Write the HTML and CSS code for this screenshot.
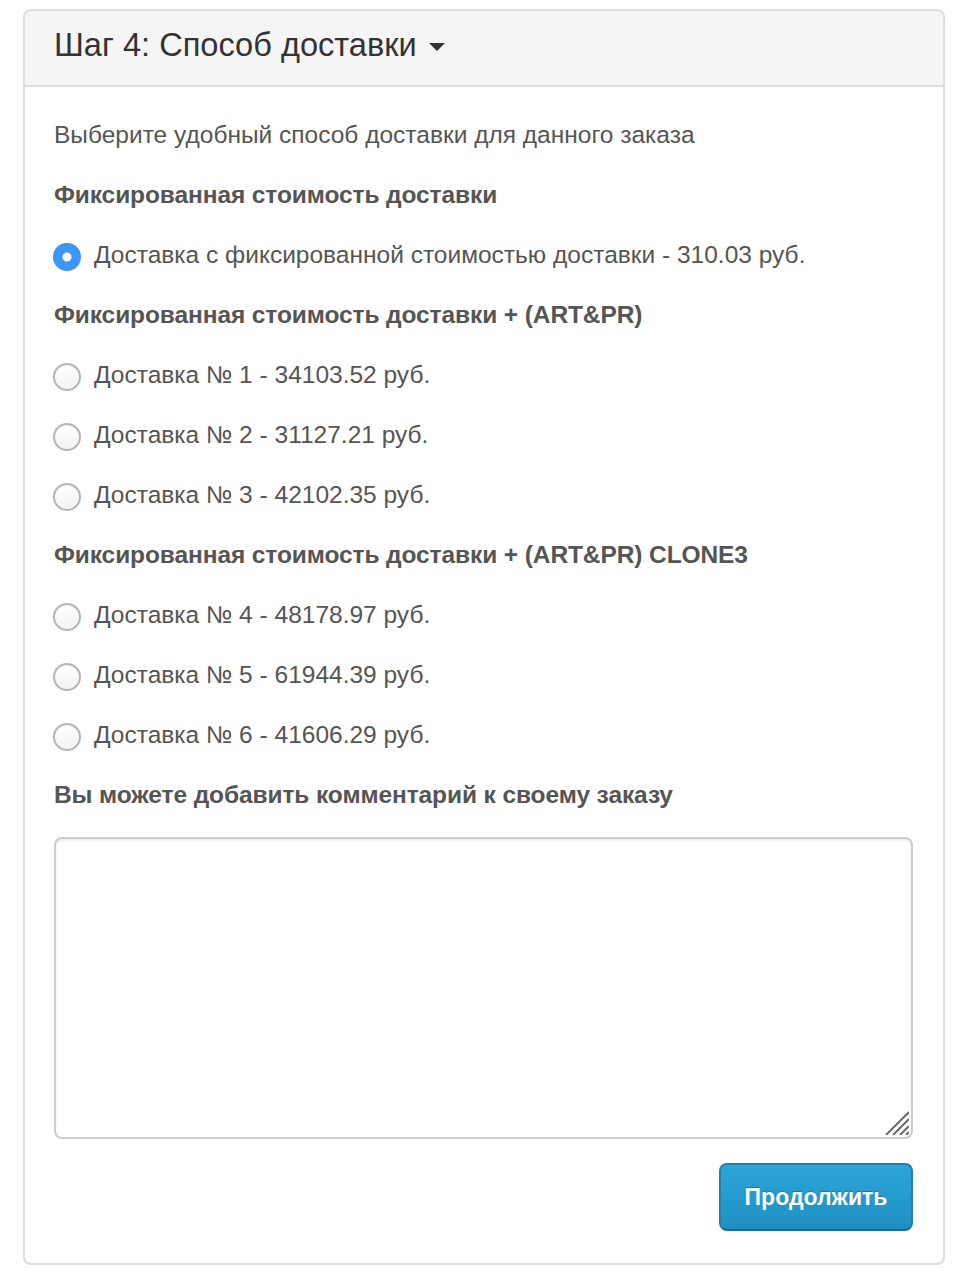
FILE: index.html
```html
<!DOCTYPE html>
<html lang="ru">

<head>
    <meta charset="UTF-8">
    <title>Шаг 4: Способ доставки</title>
    <link rel="stylesheet" href="styles.css">
</head>

<body>
    <div class="panel">
        <div class="panel-heading">
            <h4 class="panel-title">Шаг 4: Способ доставки <span class="caret"></span></h4>
        </div>
        <div class="panel-body">
            <p>Выберите удобный способ доставки для данного заказа</p>

            <p><strong>Фиксированная стоимость доставки</strong></p>
            <label class="radio">
                <input type="radio" name="shipping" checked>
                <span class="mark"></span>
                Доставка с фиксированной стоимостью доставки - 310.03 руб.
            </label>

            <p><strong>Фиксированная стоимость доставки + (ART&amp;PR)</strong></p>
            <label class="radio">
                <input type="radio" name="shipping">
                <span class="mark"></span>
                Доставка № 1 - 34103.52 руб.
            </label>
            <label class="radio">
                <input type="radio" name="shipping">
                <span class="mark"></span>
                Доставка № 2 - 31127.21 руб.
            </label>
            <label class="radio">
                <input type="radio" name="shipping">
                <span class="mark"></span>
                Доставка № 3 - 42102.35 руб.
            </label>

            <p><strong>Фиксированная стоимость доставки + (ART&amp;PR) CLONE3</strong></p>
            <label class="radio">
                <input type="radio" name="shipping">
                <span class="mark"></span>
                Доставка № 4 - 48178.97 руб.
            </label>
            <label class="radio">
                <input type="radio" name="shipping">
                <span class="mark"></span>
                Доставка № 5 - 61944.39 руб.
            </label>
            <label class="radio">
                <input type="radio" name="shipping">
                <span class="mark"></span>
                Доставка № 6 - 41606.29 руб.
            </label>

            <p class="before-comment"><strong>Вы можете добавить комментарий к своему заказу</strong></p>
            <div class="comment-wrap">
                <textarea class="comment" rows="8"></textarea>
                <svg class="grip" width="26" height="26" viewBox="0 0 26 26">
                    <path d="M26 3 L3 26 M26 10 L10 26 M26 17 L17 26 M26 23 L23 26" stroke="#6a6a6a" stroke-width="2" fill="none" />
                </svg>
            </div>

            <div class="buttons">
                <button class="btn-primary">Продолжить</button>
            </div>
        </div>
    </div>
</body>

</html>
```

FILE: styles.css
```css
* {
    box-sizing: border-box;
}

body {
    margin: 0;
    padding: 9px 15px 0 23px;
    background: #fff;
    font-family: "Liberation Sans", Arial, sans-serif;
    font-size: 24.5px;
    line-height: 40px;
    color: #555;
}

/* Panel */
.panel {
    border: 2px solid #ddd;
    border-radius: 8px;
    background: #fff;
    box-shadow: 0 1px 2px rgba(0, 0, 0, 0.05);
}

.panel-heading {
    background: #f5f5f5;
    border-bottom: 2px solid #ddd;
    border-radius: 6px 6px 0 0;
    padding: 15px 29px 21px;
}

.panel-title {
    margin: 0;
    font-size: 32.6px;
    font-weight: normal;
    line-height: 38px;
    color: #333;
}

.caret {
    display: inline-block;
    width: 0;
    height: 0;
    margin-left: 3px;
    vertical-align: middle;
    border-top: 8px solid #333;
    border-left: 8px solid transparent;
    border-right: 8px solid transparent;
}

.panel-body {
    padding: 28px 30px 32px 29px;
}

.panel-body p {
    margin: 0 0 20px;
}

.panel-body p.before-comment {
    margin-bottom: 22px;
}

.panel-body strong {
    font-weight: bold;
    letter-spacing: -0.1px;
}

/* Radios */
.radio {
    display: flex;
    align-items: center;
    gap: 13px;
    margin: 0 0 20px;
    cursor: pointer;
}

.radio input {
    display: none;
}

.radio .mark {
    flex: none;
    width: 28px;
    height: 28px;
    margin-top: 4px;
    margin-left: -1px;
    border-radius: 50%;
    border: 2px solid #b5b5b5;
    background: linear-gradient(#fff, #f3f3f3);
    box-shadow: inset 0 1px 1px rgba(0, 0, 0, 0.05);
}

.radio input:checked + .mark {
    border: none;
    background: radial-gradient(circle, #fff 0 4px, #3d97f5 5px);
}

/* Comment */
.comment-wrap {
    position: relative;
    margin: 0 0 24px;
}

.comment {
    display: block;
    width: 100%;
    height: 302px;
    padding: 12px 24px;
    border: 2px solid #ccc;
    border-radius: 8px;
    box-shadow: inset 0 2px 2px rgba(0, 0, 0, 0.075);
    font: inherit;
    color: #555;
    resize: none;
}

.grip {
    position: absolute;
    right: 4px;
    bottom: 4px;
}

.buttons {
    display: flex;
    justify-content: flex-end;
}

.btn-primary {
    width: 194px;
    height: 68px;
    border: 2px solid #1b81ad;
    border-bottom-color: #176f95;
    border-radius: 8px;
    background: linear-gradient(#2da5d8, #1f8fc0);
    color: #fff;
    font-family: "Liberation Sans", Arial, sans-serif;
    font-size: 23px;
    font-weight: bold;
    text-shadow: 0 -1px 0 rgba(0, 0, 0, 0.25);
    cursor: pointer;
}
```
